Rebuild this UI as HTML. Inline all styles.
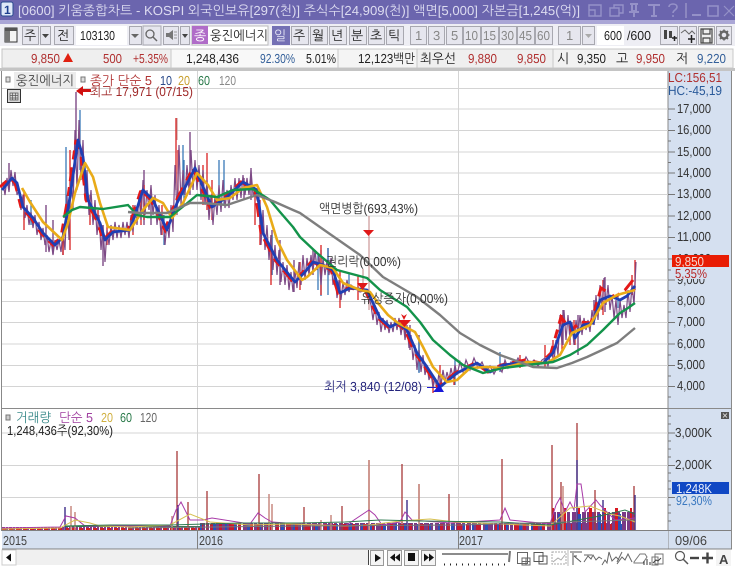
<!DOCTYPE html>
<html><head><meta charset="utf-8"><style>
html,body{margin:0;padding:0;background:#fff;width:735px;height:569px;overflow:hidden}
svg{display:block}
text{font-family:"Liberation Sans","NanumGothic","Noto Sans CJK KR",sans-serif;font-size:13px}
.t{fill:#222}
.b{fill:#e6e6ee;stroke:#a8a8b0;stroke-width:1}
.n{fill:#888;font-size:13px}
.ax{fill:#333}
</style></head><body>
<svg width="735" height="569" viewBox="0 0 735 569" xmlns="http://www.w3.org/2000/svg" text-rendering="geometricPrecision">
<rect width="735" height="569" fill="#fff"/>
<!-- title bar -->
<rect width="735" height="20" fill="#6b65ae"/>
<rect y="20" width="735" height="4" fill="#aaa6d6"/>
<rect x="1" y="2" width="12" height="14" rx="2" fill="#dfe8f8" stroke="#2a4a90"/>
<text x="4" y="14" style="font-size:12px;font-weight:bold" fill="#1d3f8f">1</text>
<text x="18" y="15" fill="#dcdbf0" textLength="562" lengthAdjust="spacingAndGlyphs">[0600] 키움종합차트 - KOSPI 외국인보유[297(천)] 주식수[24,909(천)] 액면[5,000] 자본금[1,245(억)]</text>
<g fill="none" stroke="#9591c8" stroke-width="1.400">
<path d="M589 5h12v11h-12zM589 10h6v6"/><path d="M610 8h9v8h-9zM614 8V5h9v8h-4"/>
<path d="M630 4h8M632 5v6h4V5M629 12h10M634 12v5" stroke-width="2"/>
<path d="M648 5h12M654 5v11M651 16h6" stroke-width="2"/>
<path d="M669 7c0-4 8-4 8 0 0 3-4 3-4 6" stroke-width="1.600"/><path d="M673 15v2" stroke-width="1.600"/>
<path d="M686 3v15" stroke="#9a96c8"/>
<path d="M692 15h9" stroke-width="2"/><path d="M708 6h10v10h-10z" stroke-width="1.600"/><path d="M724 6l10 10M734 6l-10 10" stroke-width="1.200"/>
</g>
<!-- toolbar -->
<rect y="24" width="735" height="22" fill="#eeeef4"/>
<rect x="5" y="28" width="12" height="14" fill="#f4f4f4" stroke="#333"/><rect x="5" y="28" width="5" height="14" fill="#777"/><rect x="5" y="28" width="12" height="3" fill="#555"/>
<rect x="22.500" y="26.500" width="16" height="18" class="b"/><text x="24" y="40" class="t">주</text>
<rect x="40.500" y="26.500" width="10" height="18" class="b"/><path d="M42 34h7l-3.500 4z" fill="#444"/>
<rect x="54.500" y="26.500" width="19" height="18" class="b"/><text x="57" y="40" class="t">전</text>
<rect x="76" y="26" width="51" height="19" fill="#fff"/><text x="80" y="40" class="t" textLength="35" lengthAdjust="spacingAndGlyphs">103130</text>
<rect x="129.500" y="26.500" width="12" height="18" class="b"/><path d="M131 34h8l-4 4z" fill="#666"/>
<rect x="143" y="26" width="18" height="19" class="b"/><circle cx="150" cy="34" r="4" fill="none" stroke="#666" stroke-width="1.300"/><path d="M153 37l4 4" stroke="#666" stroke-width="1.500"/>
<rect x="163.500" y="26.500" width="15" height="18" class="b"/><path d="M166 33h3l4-3v10l-4-3h-3z" fill="#777"/><path d="M174 32h3M174 35h3M174 38h3" stroke="#999"/>
<rect x="180.500" y="26.500" width="9" height="18" class="b"/><path d="M182 34h6l-3 4z" fill="#444"/>
<rect x="192" y="26" width="76" height="19" fill="#fff" stroke="#bbb"/>
<rect x="192" y="26" width="16" height="18" fill="#b06cc8"/><text x="194" y="40" fill="#fff">종</text>
<text x="210" y="40" class="t" textLength="58" lengthAdjust="spacingAndGlyphs">웅진에너지</text>
<rect x="272" y="26" width="18" height="19" fill="#7470b4"/><text x="274" y="40" fill="#e6e6f6">일</text>
<g>
<rect x="291.500" y="26.500" width="17" height="18" class="b"/><text x="293" y="40" class="t">주</text>
<rect x="310.500" y="26.500" width="17" height="18" class="b"/><text x="312" y="40" class="t">월</text>
<rect x="329.500" y="26.500" width="17" height="18" class="b"/><text x="331" y="40" class="t">년</text>
<rect x="349.500" y="26.500" width="17" height="18" class="b"/><text x="351" y="40" class="t">분</text>
<rect x="368.500" y="26.500" width="16" height="18" class="b"/><text x="370" y="40" class="t">초</text>
<rect x="386.500" y="26.500" width="17" height="18" class="b"/><text x="388" y="40" class="t">틱</text>
</g>
<g>
<rect x="410.500" y="26.500" width="16" height="18" class="b"/><text x="415" y="40" class="n">1</text>
<rect x="428.500" y="26.500" width="16" height="18" class="b"/><text x="433" y="40" class="n">3</text>
<rect x="446.500" y="26.500" width="16" height="18" class="b"/><text x="451" y="40" class="n">5</text>
<rect x="463.500" y="26.500" width="17" height="18" class="b"/><text x="465" y="40" class="n" textLength="13" lengthAdjust="spacingAndGlyphs">10</text>
<rect x="481.500" y="26.500" width="17" height="18" class="b"/><text x="483" y="40" class="n" textLength="13" lengthAdjust="spacingAndGlyphs">15</text>
<rect x="499.500" y="26.500" width="17" height="18" class="b"/><text x="501" y="40" class="n" textLength="13" lengthAdjust="spacingAndGlyphs">30</text>
<rect x="517.500" y="26.500" width="17" height="18" class="b"/><text x="519" y="40" class="n" textLength="13" lengthAdjust="spacingAndGlyphs">45</text>
<rect x="535.500" y="26.500" width="17" height="18" class="b"/><text x="537" y="40" class="n" textLength="13" lengthAdjust="spacingAndGlyphs">60</text>
<rect x="558.500" y="26.500" width="22" height="18" class="b"/><text x="566" y="40" class="n">1</text>
<rect x="582.500" y="26.500" width="12" height="18" class="b"/><path d="M585 34h7l-3.500 4z" fill="#aaa"/>
</g>
<rect x="597" y="26" width="27" height="19" fill="#fff"/><text x="604" y="40" class="t" textLength="18" lengthAdjust="spacingAndGlyphs">600</text>
<text x="627" y="40" class="t" textLength="24" lengthAdjust="spacingAndGlyphs">/600</text>
<rect x="660.500" y="26.500" width="17" height="18" class="b" fill="#f4f4f4"/>
<path d="M664 30h3v9h-3zM669 31h3v7h-3z" fill="#444"/><path d="M672 38h5M674.500 36v5" stroke="#222" stroke-width="1.500"/>
<rect x="679.500" y="26.500" width="17" height="18" class="b" fill="#f4f4f4"/>
<path d="M681 33l4-3 4 4 3-3 3 3" fill="none" stroke="#666"/><path d="M688 39h7M691.500 35v8" stroke="#222" stroke-width="1.500"/>
<rect x="698.500" y="26.500" width="16" height="18" fill="#eee" stroke="#a8a8b0"/><path d="M701 29h11v14h-11zM703 29v5h7v-5M703 43v-5h7v5" fill="none" stroke="#444" stroke-width="1.200"/>
<rect x="716.500" y="26.500" width="15" height="18" class="b"/><circle cx="724" cy="35" r="3.500" fill="none" stroke="#666" stroke-width="2.400"/><path d="M724 29.500v2M724 38.500v2M718.500 35h2M727.500 35h2M720 31l1.500 1.500M726.500 37.500l1.500 1.500M728 31l-1.500 1.500M721.500 37.500l-1.500 1.500" stroke="#666" stroke-width="1.600"/>
<!-- info bar -->
<rect y="46" width="735" height="3" fill="#fff"/>
<rect x="2" y="49" width="731" height="19" fill="#efefef" stroke="#c4c4c4"/>
<rect x="171" y="49" width="167" height="19" fill="#f8f8f8" stroke="#c8c8c8"/><rect x="338" y="49" width="79" height="19" fill="#f4f4f4" stroke="#c8c8c8"/><rect x="417" y="49" width="174" height="19" fill="#efefef" stroke="#c8c8c8"/><rect x="553" y="49" width="180" height="19" fill="#f2f2f2" stroke="#c8c8c8"/>
<rect y="68" width="735" height="3" fill="#c4c4c4"/>
<g fill="#b03030">
<text x="31" y="63" textLength="29" lengthAdjust="spacingAndGlyphs">9,850</text>
<text x="103" y="63" textLength="19" lengthAdjust="spacingAndGlyphs">500</text>
<text x="133" y="63" textLength="35" lengthAdjust="spacingAndGlyphs">+5.35%</text>
<text x="468" y="63" textLength="29" lengthAdjust="spacingAndGlyphs">9,880</text>
<text x="517" y="63" textLength="29" lengthAdjust="spacingAndGlyphs">9,850</text>
<text x="636" y="63" textLength="29" lengthAdjust="spacingAndGlyphs">9,950</text>
</g>
<path d="M63 62l5-9 5 9z" fill="#e02010"/>
<text x="186" y="63" class="t" textLength="53" lengthAdjust="spacingAndGlyphs">1,248,436</text>
<text x="260" y="63" fill="#34609a" textLength="35" lengthAdjust="spacingAndGlyphs">92.30%</text>
<text x="306" y="63" class="t" textLength="30" lengthAdjust="spacingAndGlyphs">5.01%</text>
<text x="358" y="63" class="t" textLength="57" lengthAdjust="spacingAndGlyphs">12,123백만</text>
<text x="420" y="63" class="t" textLength="36" lengthAdjust="spacingAndGlyphs">최우선</text>
<text x="557" y="63" class="t">시</text>
<text x="577" y="63" class="t" textLength="29" lengthAdjust="spacingAndGlyphs">9,350</text>
<text x="616" y="63" class="t">고</text>
<text x="676" y="63" class="t">저</text>
<text x="697" y="63" fill="#34609a" textLength="29" lengthAdjust="spacingAndGlyphs">9,220</text>
<!-- chart frames -->
<rect x="1.500" y="71.500" width="666" height="337" fill="#fff"/>
<path d="M1.500 71v460" stroke="#888" stroke-width="1"/>
<rect x="668" y="71" width="63" height="478" fill="#d5e0f0"/>
<path d="M668 71v478M731.500 71v478" stroke="#8a8a8a"/>
<path d="M2 408.500h729" stroke="#8a8a8a"/>
<!-- grid -->
<g stroke="#d4d4d4" stroke-width="1">
<path d="M2 88.500h666M2 109h666M2 130.500h666M2 152h666M2 173h666M2 194.500h666M2 216h666M2 237.500h666M2 259h666M2 280h666M2 301.500h666M2 322.500h666M2 344h666M2 365.500h666M2 386.500h666"/>
<path d="M197.500 71v337M458.500 71v337M197.500 409v122M458.500 409v122"/>
<path d="M2 433h666M2 465.500h666M2 497.500h666"/>
</g>
<!-- wicks -->
<g fill="none" stroke-width="1.400" stroke="#7d4a86">
<path d="M9 163V190M76 92V145M46 205V252M53 220V254M144 170V225M151 190V225M190 132V195M251 168V200M244 178V200M272 230V275M280 240V285M294 260V292M313 250V275M328 248V272M605 277V312M594 300V325M563 310V345M578 315V355M419 335V372M410 325V350M103 225V266M63 230V255"/>
</g>
<g fill="none" stroke-width="1.300" stroke="#3a7ab8">
<path d="M66 147V230M80 110V170M219 160V205M224 160V205M164 215V245M183 145V195M184 160V205M272 235V275M321 250V296M328 248V295M318 255V290M419 340V373M349 274V292M618 295V308M24 195V220M31 200V225M455 360V385M500 352V372"/>
</g>
<g fill="none" stroke-width="1.300" stroke="#d92020">
<path d="M70 150V250M176 118V190M207 153V210M144 185V220M24 190V230M63 225V255M162 205V235M178 150V200M255 190V225M260 200V245M271 235V285M300 262V290M321 245V295M340 270V308M405 320V335M358 275V300M562 315V350M570 325V345M575 335V345M574 320V342M603 280V315M635 260V290M632 275V295M203 165V205M212 180V220M90 195V225M98 210V230M107 225V245M133 205V235M141 190V225M545 345V368M553 340V360M433 375V393M440 365V392M454 375V385M520 355V368"/>
</g>
<g fill="none" stroke-width="1" stroke="#c28080"><path d="M177 118V140M369 216V310M363 269V290"/></g>
<!-- dense candle zigzag -->
<polyline fill="none" stroke="#7d4a86" stroke-width="1.200" points="3,182 5,195 7,178 9,192 11,170 13,186 15,172 17,195 19,190 21,210 23,195 25,218 27,205 29,225 31,212 33,228 35,215 37,235 39,222 41,240 43,228 45,245 47,235 49,252 51,240 53,255 55,240 57,250 59,240 61,252 63,232 65,250 67,195 69,240 71,170 73,210 75,130 77,190 79,120 81,180 83,140 85,200 87,170 89,215 91,190 93,225 95,200 97,235 99,215 101,250 103,225 105,262 107,230 109,245 111,225 113,240 115,222 117,238 119,225 121,238 123,222 125,235 127,222 129,238 131,215 133,232 135,205 137,225 139,195 141,220 143,180 145,215 147,190 149,210 151,185 153,215 155,195 157,225 159,205 161,235 163,215 165,245 167,222 169,238 171,205 173,232 175,165 177,215 179,145 181,205 183,170 185,195 187,165 189,190 191,150 193,190 195,160 197,190 199,165 201,200 203,170 205,205 207,180 209,220 211,195 213,225 215,195 217,215 219,185 221,212 223,180 225,208 227,190 229,208 231,185 233,200 235,178 237,200 239,178 241,198 243,175 245,195 247,178 249,195 251,170 253,195 255,190 257,200 259,205 261,245 263,210 265,250 267,225 269,260 271,235 273,270 275,245 277,275 279,250 281,282 283,262 285,285 287,265 289,290 291,272 293,292 295,270 297,288 299,262 301,285 303,255 305,280 307,258 309,275 311,255 313,272 315,250 317,270 319,255 321,285 323,258 325,275 327,260 329,275 331,258 333,285 335,272 337,298 339,280 341,300 343,282 345,295 347,280 349,292 351,285 360,292 367,290 371,305 373,320 375,305 377,325 379,312 381,332 383,318 385,330 387,320 389,333 391,322 393,332 395,318 397,330 399,318 401,335 403,320 405,340 407,325 409,348 411,335 413,360 415,345 417,370 419,350 421,372 423,355 425,375 427,365 429,380 431,372 433,388 435,378 437,390 439,372 441,385 443,370 445,382 447,372 449,380 451,368 453,378 455,365 457,375 460,362 463,372 466,360 470,370 474,358 478,368 482,362 486,372 490,366 494,374 498,366 502,372 505,360 508,368 511,362 514,366 518,358 522,366 526,357 530,364 534,360 538,366 542,360 545,358 548,366 551,350 554,362 556,340 558,355 560,315 562,345 564,310 566,340 568,315 570,340 572,322 574,345 576,320 578,335 580,315 582,335 584,318 586,330 588,320 590,332 592,310 594,325 596,295 598,320 600,285 602,310 604,278 606,305 608,285 610,310 612,295 614,318 616,300 618,325 620,300 622,318 624,305 626,318 628,290 630,312 632,285 634,305 636,262"/>
<!-- candle bodies -->
<g transform="translate(-2 0)"><polyline fill="none" stroke="#e41818" stroke-width="3" stroke-dasharray="9 6 14 8" points="2,187 12,178 17,183 23,207 33,218 43,233 55,245 63,237 70,197 78,140 83,157 88,200 100,223 105,240 113,232 130,230 143,190 153,200 167,230 177,203 195,168 203,187 212,207 227,197 243,182 257,190 263,233 277,260 295,282 305,272 313,262 323,265 333,270 340,293 350,288 367,290 380,318 390,327 398,323 407,330 417,353 427,367 440,387 457,373 477,363 490,372 503,365 527,360 543,363 553,353 563,317 573,330 583,322 593,323 603,288 617,297 627,290 635,280"/></g>
<polyline fill="none" stroke="#1f3fb4" stroke-width="2.800" stroke-linejoin="round" points="2,190 12,178 17,183 23,207 33,218 43,233 55,245 63,237 70,197 78,140 83,157 88,200 100,223 105,240 113,232 130,230 143,190 153,200 167,230 177,203 195,168 203,187 212,207 227,197 243,182 257,190 263,233 277,260 295,282 305,272 313,262 323,265 333,270 340,293 350,288 367,290 380,318 390,327 398,323 407,330 417,353 427,367 440,387 457,373 477,363 490,372 503,365 527,362 543,363 553,353 563,325 570,322 575,338 583,325 593,323 600,300 610,296 620,300 627,296 635,286"/>
<polyline fill="none" stroke="#e9ab18" stroke-width="2.600" stroke-linejoin="round" points="22,188 30,202 43,222 62,240 68,223 75,193 85,163 93,177 100,203 108,227 130,230 143,210 153,198 163,203 172,218 183,203 197,173 208,185 217,200 230,198 243,188 257,185 267,207 277,240 287,260 302,280 307,277 320,265 333,268 343,283 360,290 370,292 378,303 388,315 398,323 415,332 423,347 433,367 447,382 457,380 470,368 487,367 503,368 527,362 547,363 560,355 572,333 590,325 603,303 617,295 635,290"/>
<polyline fill="none" stroke="#13934a" stroke-width="2.400" stroke-linejoin="round" points="63,217 72,210 80,207 103,209 128,205 137,215 147,217 170,217 185,205 197,195 217,197 233,190 253,189 270,200 280,212 293,227 300,237 317,253 337,270 367,278 380,290 407,307 420,322 433,340 450,355 463,365 483,373 503,368 527,365 553,362 570,355 587,345 603,330 620,313 628,308 635,303"/>
<polyline fill="none" stroke="#7e7e7e" stroke-width="2.400" stroke-linejoin="round" points="128,212 140,213 167,213 190,203 203,203 227,205 257,195 275,202 293,210 300,213 327,232 360,255 383,277 417,297 440,315 460,333 480,345 500,355 533,367 557,368 572,363 587,357 600,351 617,343 635,328"/>
<!-- event markers -->
<path d="M363 230h11l-5.500 6z" fill="#e01818"/><path d="M357 283h11l-5.500 7z" fill="#e01818"/>
<path d="M398 320h13l-6.500 7z" fill="#e01818"/><path d="M404 320l-3-6 3 2 3-2z" fill="#e01818"/>
<path d="M427 387.500h9" stroke="#1d1dd0"/><path d="M433 392h11l-5.500-9-1 4z" fill="#1818d8"/>
<path d="M76 91l7-5v3h8v3h-8v4z" fill="#d01010"/>
<!-- annotations -->
<text x="319" y="213" fill="#333" textLength="99" lengthAdjust="spacingAndGlyphs">액면병합(693,43%)</text>
<text x="326" y="266" fill="#333" textLength="75" lengthAdjust="spacingAndGlyphs">권리락(0,00%)</text>
<text x="361" y="303" fill="#333" textLength="87" lengthAdjust="spacingAndGlyphs">유상증자(0,00%)</text>
<text x="324" y="391" fill="#24247c" textLength="98" lengthAdjust="spacingAndGlyphs">최저 3,840 (12/08)</text>
<!-- legend -->
<rect x="14" y="72" width="62" height="16" fill="#ececec"/>
<rect x="6" y="77" width="4" height="5" fill="#ddd" stroke="#777"/><rect x="81" y="77" width="4" height="5" fill="#ddd" stroke="#777"/>
<text x="16" y="85" fill="#444" textLength="58" lengthAdjust="spacingAndGlyphs">웅진에너지</text>
<text x="90" y="85" fill="#b03434" textLength="62" lengthAdjust="spacingAndGlyphs">종가 단순 5</text>
<text x="160" y="85" fill="#2a4a8a" textLength="12" lengthAdjust="spacingAndGlyphs">10</text>
<text x="178" y="85" fill="#c8a030" textLength="12" lengthAdjust="spacingAndGlyphs">20</text>
<text x="198" y="85" fill="#2a7a4a" textLength="12" lengthAdjust="spacingAndGlyphs">60</text>
<text x="219" y="85" fill="#888" textLength="17" lengthAdjust="spacingAndGlyphs">120</text>
<text x="90" y="96" fill="#a02a2a" textLength="103" lengthAdjust="spacingAndGlyphs">최고 17,971 (07/15)</text>
<rect x="7.500" y="89.500" width="13" height="13" fill="#d8d8d8" stroke="#333"/><path d="M10 93h8v7h-8zM10 95.500h8M10 98h8M12.500 93v7M15.500 93v7" fill="none" stroke="#555" stroke-width=".7"/>
<!-- price axis -->
<g class="ax" fill="#333">
<text x="677" y="113" textLength="34" lengthAdjust="spacingAndGlyphs">17,000</text>
<text x="677" y="134" textLength="34" lengthAdjust="spacingAndGlyphs">16,000</text>
<text x="677" y="156" textLength="34" lengthAdjust="spacingAndGlyphs">15,000</text>
<text x="677" y="177" textLength="34" lengthAdjust="spacingAndGlyphs">14,000</text>
<text x="677" y="198" textLength="34" lengthAdjust="spacingAndGlyphs">13,000</text>
<text x="677" y="220" textLength="34" lengthAdjust="spacingAndGlyphs">12,000</text>
<text x="677" y="241" textLength="34" lengthAdjust="spacingAndGlyphs">11,000</text>
<text x="677" y="263" textLength="34" lengthAdjust="spacingAndGlyphs">10,000</text>
<text x="677" y="284" textLength="28" lengthAdjust="spacingAndGlyphs">9,000</text>
<text x="677" y="305" textLength="28" lengthAdjust="spacingAndGlyphs">8,000</text>
<text x="677" y="326" textLength="28" lengthAdjust="spacingAndGlyphs">7,000</text>
<text x="677" y="348" textLength="28" lengthAdjust="spacingAndGlyphs">6,000</text>
<text x="677" y="369" textLength="28" lengthAdjust="spacingAndGlyphs">5,000</text>
<text x="677" y="390" textLength="28" lengthAdjust="spacingAndGlyphs">4,000</text>
</g>
<path stroke="#777" fill="none" d="M668 109h7M668 130.500h7M668 152h7M668 173h7M668 194.500h7M668 216h7M668 237.500h7M668 259h7M668 280h7M668 301.500h7M668 322.500h7M668 344h7M668 365.500h7M668 386.500h7M668 119.500h3M668 141h3M668 162.500h3M668 184h3M668 205h3M668 227h3M668 248h3M668 270h3M668 291h3M668 312h3M668 333h3M668 355h3M668 376h3M668 397h3"/>
<text x="668" y="82" fill="#b03030" textLength="54" lengthAdjust="spacingAndGlyphs">LC:156,51</text>
<text x="668" y="95" fill="#2a5a9a" textLength="54" lengthAdjust="spacingAndGlyphs">HC:-45,19</text>
<rect x="672" y="255" width="57" height="12" fill="#e81c04"/>
<text x="675" y="266" fill="#f4d8d0" textLength="29" lengthAdjust="spacingAndGlyphs">9,850</text>
<rect x="674" y="268" width="34" height="11" fill="#d5e0f0"/>
<text x="675" y="278" fill="#b82828" textLength="32" lengthAdjust="spacingAndGlyphs">5,35%</text>
<!-- volume bars dense -->
<path d="M2 528.500H200" stroke="#8a3a8a" stroke-width="3" stroke-dasharray="3 1 2 1"/>
<path d="M2 529H200" stroke="#d02020" stroke-width="2" stroke-dasharray="4 3"/>
<path d="M65 526.500H200" stroke="#2e7a50" stroke-width="1"/>
<path d="M200 526.500H635" stroke="#7a3a86" stroke-width="7" stroke-dasharray="5 1 3 2 4 1"/>
<path d="M200 527H635" stroke="#c81830" stroke-width="6" stroke-dasharray="3 7 5 4"/>
<path d="M200 527H635" stroke="#2a50b8" stroke-width="6" stroke-dasharray="2 11 3 9 2 7"/>
<path d="M552 521H635" stroke="#7a3a86" stroke-width="18" stroke-dasharray="4 1 3 2"/>
<path d="M552 519H635" stroke="#d81820" stroke-width="22" stroke-dasharray="2 9 3 12"/>
<path d="M558 522H635" stroke="#2a50b8" stroke-width="16" stroke-dasharray="3 17"/>
<g fill="none" stroke-width="1.300">
<path stroke="#a83838" d="M177 451V530M207 491V530M259 474V530M188 502V530M304 507V530M369 460V530M402 464V530M449 494V530M502 459V530M552 445V530M577 423V530M561 482V530M595 490V530M634 486V530M342 506V530M419 484V530"/>
<path stroke="#c88a80" stroke-width="1.500" d="M71 506V530M75 512V530M172 516V530M269 494V530M272 504V530M321 520V530M331 515V530M369 460V530M419 484V530M563 486V530"/>
<path stroke="#4a3a90" stroke-width="1.500" d="M65 507V530M178 505V530M407 500V530M577 460V530M603 500V530M635 495V530"/>
</g>
<g fill="none" stroke-width="1">
<polyline stroke="#a83aa8" points="2,528 60,527 66,516 75,518 85,526 170,526 176,510 181,502 190,520 203,520 212,518 250,524 258,513 265,518 272,522 300,524 345,526 369,510 375,515 382,525 400,522 405,512 412,520 450,523 500,520 505,508 510,520 550,524 556,505 560,498 565,512 570,502 574,510 577,484 581,484 585,512 596,500 600,505 605,510 615,520 635,518"/>
<polyline stroke="#d6c050" points="2,529 60,528 75,520 90,523 100,526 130,527 170,525 190,514 210,522 250,525 290,524 345,526 370,525 400,521 430,519 455,522 500,524 550,526 570,508 590,506 610,514 620,516 635,522"/>
<polyline stroke="#2e7a50" points="65,526 110,525 130,525 170,525 240,523 300,523 345,522 380,520 420,521 500,522 550,525 600,516 625,510 635,514"/>
<polyline stroke="#777" points="128,528 300,526 460,525 635,520"/>
</g>
<!-- volume legend -->
<rect x="6" y="415" width="4" height="5" fill="#ccc" stroke="#777"/>
<text x="16" y="422" fill="#3a8a8a" textLength="35" lengthAdjust="spacingAndGlyphs">거래량</text>
<text x="59" y="422" fill="#a040a0" textLength="34" lengthAdjust="spacingAndGlyphs">단순 5</text>
<text x="101" y="422" fill="#d0b040" textLength="12" lengthAdjust="spacingAndGlyphs">20</text>
<text x="120" y="422" fill="#2a7a4a" textLength="12" lengthAdjust="spacingAndGlyphs">60</text>
<text x="140" y="422" fill="#666" textLength="17" lengthAdjust="spacingAndGlyphs">120</text>
<text x="7" y="435" fill="#222" textLength="106" lengthAdjust="spacingAndGlyphs">1,248,436주(92,30%)</text>
<!-- volume axis -->
<path stroke="#777" fill="none" d="M668 433h7M668 465.500h7M668 497.500h7M668 416h3M668 424h3M668 441h3M668 449h3M668 457h3M668 473h3M668 481h3M668 489h3M668 505h3M668 513h3M668 521h3"/>
<rect x="721" y="412" width="8" height="7" fill="#555"/><path d="M723 413.500l4 4M727 413.500l-4 4" stroke="#eee" stroke-width=".8"/>
<text x="675" y="437" fill="#333" textLength="37" lengthAdjust="spacingAndGlyphs">3,000K</text>
<text x="675" y="469" fill="#333" textLength="37" lengthAdjust="spacingAndGlyphs">2,000K</text>
<rect x="672" y="482" width="57" height="12" fill="#1048c4"/>
<text x="676" y="493" fill="#e8eefa" textLength="36" lengthAdjust="spacingAndGlyphs">1,248K</text>
<text x="676" y="505" fill="#3a78c0" textLength="36" lengthAdjust="spacingAndGlyphs">92,30%</text>
<!-- date axis -->
<rect x="2" y="531" width="666" height="18" fill="#d5e0f0"/>
<path d="M2 530.500h729M2 549h730" stroke="#808080"/>
<path d="M197.500 531v18M458.500 531v18" stroke="#808080"/>
<text x="3" y="545" fill="#444" textLength="24" lengthAdjust="spacingAndGlyphs">2015</text>
<text x="199" y="545" fill="#444" textLength="24" lengthAdjust="spacingAndGlyphs">2016</text>
<text x="459" y="545" fill="#444" textLength="24" lengthAdjust="spacingAndGlyphs">2017</text>
<text x="675" y="545" fill="#444" textLength="32" lengthAdjust="spacingAndGlyphs">09/06</text>
<!-- bottom bar -->
<rect y="550" width="735" height="19" fill="#fff"/>
<rect x="2" y="550" width="366" height="15" fill="#f0f0f0"/>
<rect x="2" y="550" width="14" height="15" fill="#fff" stroke="#ccc"/><path d="M6 557.500l5-4v8z" fill="#111"/>
<path d="M368.500 550v15" stroke="#444"/>
<g stroke="#999" fill="#f4f4f4"><rect x="370.500" y="550.500" width="13" height="15"/><rect x="387.500" y="550.500" width="14" height="15"/><rect x="404.500" y="550.500" width="14" height="15"/><rect x="421.500" y="550.500" width="14" height="15"/></g>
<path d="M375 554l6 4-6 4zM390 557.500l5-4v8zM395 557.500l5-4v8zM408 553h7v8h-7zM424 553.500l5 4-5 4zM429 553.500l5 4-5 4z" fill="#111"/>
<path d="M442 554h66" stroke="#666" stroke-width="1.500"/><path d="M510 551l-1 11" stroke="#777" stroke-width="2"/>
<path d="M444 564.500h65" stroke="#222" stroke-dasharray="1 5" stroke-width="2"/>
<g fill="none" stroke="#888" stroke-width="1">
<path d="M517.500 552.500h10v11h-10zM522 558h8v7h-8zM526 558v7M522 561.500h8" stroke="#666"/>
<path d="M534 552.500h9v9h-9zM539 556h8v8h-8z" stroke="#555"/>
<path d="M552 552h14v12h-14z" stroke-dasharray="2 1" stroke="#aaa"/><path d="M553 562l5-4 3 2 4-5" stroke="#aaa"/>
<path d="M568 550v16" stroke="#bbb"/>
<path d="M570 552h12M573 565v-12M574 556l7 6M574 556h3" stroke="#555"/>
<path d="M584 562l4-6 3 3 2-4 3 5 3-3 3 2M584 555h8" stroke="#666"/>
<path d="M602 565l3-5 2 3 2-11 3 9 4-4 3 3" stroke="#666"/>
<path d="M617 564l5-7 3 3 3-6 4 8M622 552l-5 10" stroke="#666"/>
<path d="M634 562l6-8h5l2 3-4 6h-9z" stroke="#777"/>
<path d="M644 565v-4M647 565v-6M650 565v-3" stroke="#333"/>
<path d="M655 554h8v10h-8zM652 557h6v8h-6z" stroke="#777"/><path d="M653 563l3-3 2 1 3-3" stroke="#444"/>
</g>
<circle cx="680" cy="556" r="4.500" fill="none" stroke="#555" stroke-width="1.200"/><path d="M683 559l5 5" stroke="#555" stroke-width="1.500"/>
<path d="M690 558h9" stroke="#444" stroke-width="2.400"/>
<path d="M702 558h11M707.500 552.500v11" stroke="#444" stroke-width="2.400"/>
<rect x="716" y="550" width="15" height="16" fill="#f4f4f4"/>
<text x="719" y="564" style="font-size:13px;font-weight:bold" fill="#444">A</text>
</svg>
</body></html>
